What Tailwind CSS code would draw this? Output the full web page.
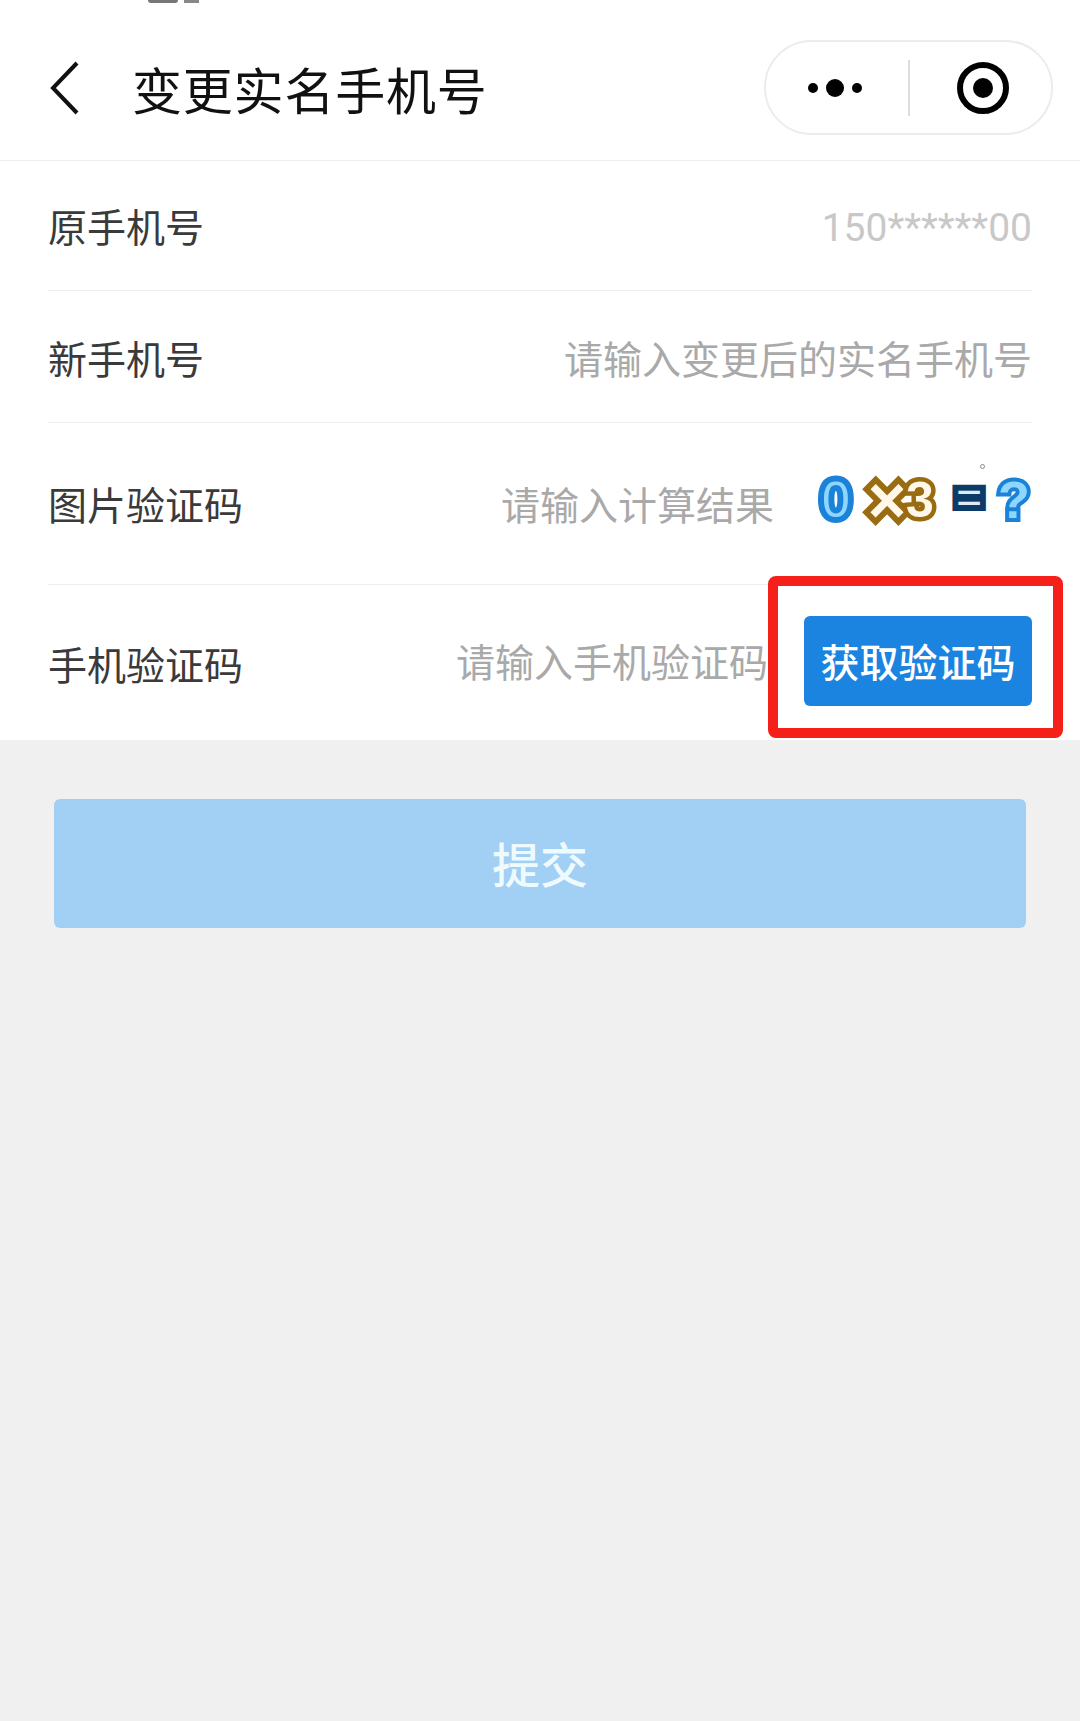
<!DOCTYPE html>
<html lang="zh-CN">
<head>
    <meta charset="UTF-8" />
    <meta name="viewport" content="width=device-width, initial-scale=1" />
    <title>变更实名手机号</title>
    <script src="https://cdn.jsdelivr.net/npm/@tailwindcss/browser@4"></script>
</head>
<body class="relative w-[1080px] h-[1721px] overflow-hidden bg-[#f0f0f0] font-['Noto_Sans_CJK_SC','Noto_Sans',sans-serif]">

<!-- Status bar leftovers at the top edge -->
<div class="absolute left-[148px] top-0 w-[30px] h-[3px] rounded-b bg-[#777]"></div>
<div class="absolute left-[184px] top-0 w-[15px] h-[3px] bg-[#888]"></div>

<!-- Header -->
<header class="h-[161px] flex items-center bg-white border-b border-[#eeeeee] pl-[50px] pr-[27px] pt-[15px]">
    <svg class="w-[30px] h-[54px] shrink-0" viewBox="0 0 30 54" fill="none" stroke="#111" stroke-width="4">
        <path d="M27 2 L3 27 L27 52" />
    </svg>
    <h1 class="ml-[52px] text-[50px] leading-none tracking-[0.8px] text-[#111]">变更实名手机号</h1>
    <div class="ml-auto w-[289px] h-[95px] rounded-full border-2 border-[#ececec] flex items-center">
        <div class="w-[142px] pr-[4px] flex items-center justify-center gap-[8px]">
            <span class="w-[10px] h-[10px] rounded-full bg-black"></span>
            <span class="w-[18px] h-[18px] rounded-full bg-black"></span>
            <span class="w-[10px] h-[10px] rounded-full bg-black"></span>
        </div>
        <div class="w-[2px] h-[56px] bg-[#dddddd]"></div>
        <div class="flex-1 flex items-center justify-center pl-[4px]">
            <svg class="w-[54px] h-[54px]" viewBox="0 0 54 54">
                <circle cx="27" cy="27" r="23" fill="none" stroke="#000" stroke-width="6" />
                <circle cx="27" cy="27" r="10" fill="#000" />
            </svg>
        </div>
    </div>
</header>

<!-- Form -->
<section class="bg-white px-[48px] h-[579px] text-[39px] leading-none">
    <div class="h-[130px] flex items-center justify-between border-b border-[#eeeeee]">
        <span class="text-[#3a3a3a]">原手机号</span>
        <span class="mt-[5px] text-[#c8c8c8] font-['Roboto',sans-serif] text-[39px]">150******00</span>
    </div>
    <div class="h-[132px] pt-[2px] flex items-center justify-between border-b border-[#eeeeee]">
        <span class="text-[#3a3a3a]">新手机号</span>
        <span class="text-[#a9a9a9]">请输入变更后的实名手机号</span>
    </div>
    <div class="h-[162px] flex items-center border-b border-[#eeeeee]">
        <span class="text-[#3a3a3a]">图片验证码</span>
        <span class="ml-auto text-[#a9a9a9]">请输入计算结果</span>
        <!-- Captcha -->
        <div class="relative ml-[44px] w-[214px] h-[56px] mt-[-8px] flex items-center font-['Liberation_Sans',sans-serif] leading-none">
            <span class="w-[36px] text-center text-[50px] text-[#8fd6ff] [-webkit-text-stroke:12px_#1a82d8] [paint-order:stroke_fill]">0</span>
            <span class="ml-[13px] w-[40px] text-center text-[66px] font-bold text-[#fff8e8] [-webkit-text-stroke:12px_#9a6c12] [paint-order:stroke_fill]">×</span>
            <span class="ml-[-3px] w-[32px] text-center text-[50px] font-bold text-[#fff8e8] [-webkit-text-stroke:9px_#9a6c12] [paint-order:stroke_fill]">3</span>
            <span class="ml-[17px] w-[32px] text-center text-[44px] mt-[-4px] text-[#dfeaf5] [-webkit-text-stroke:12px_#0c3a69] [paint-order:stroke_fill]">=</span>
            <span class="ml-[13px] w-[32px] text-center text-[52px] font-bold text-[#8fd6ff] [-webkit-text-stroke:8px_#1a82d8] [paint-order:stroke_fill]">?</span>
            <span class="absolute left-[162px] top-[-8px] w-[5px] h-[5px] rounded-full border border-[#888]"></span>
        </div>
    </div>
    <div class="h-[155px] flex items-center">
        <span class="mt-[2px] text-[#3a3a3a]">手机验证码</span>
        <span class="ml-auto mt-[-4px] text-[#a9a9a9]">请输入手机验证码</span>
        <button class="ml-[36px] mt-[-4px] w-[228px] h-[90px] rounded-[6px] bg-[#1b84e0] text-white text-[39px] font-medium leading-none">获取验证码</button>
    </div>
</section>

<!-- Submit -->
<div class="px-[54px] pt-[59px]">
    <button class="w-full h-[129px] pb-[4px] rounded-[6px] bg-[#a1d0f4] text-[#effaff] text-[48px] font-medium leading-none">提交</button>
</div>

<!-- Red annotation box drawn over the screenshot -->
<div class="absolute left-[768px] top-[576px] w-[295px] h-[162px] rounded-[8px] border-[10px] border-[#f5201a]"></div>

</body>
</html>
